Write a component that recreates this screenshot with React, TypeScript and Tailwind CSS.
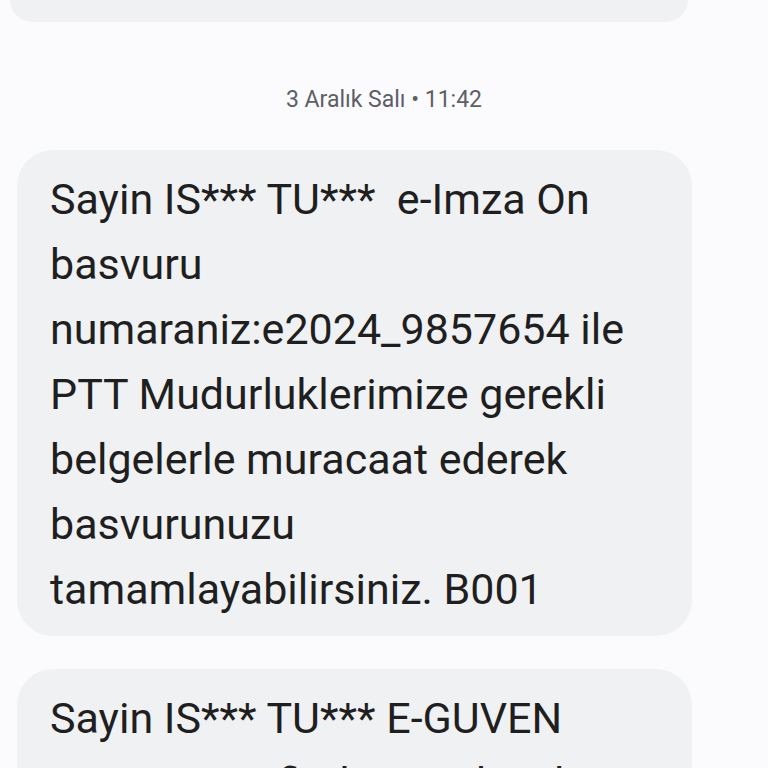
export default function App() {
  const lines = [
    'Sayin IS*** TU***\u00a0\u00a0e-Imza On',
    'basvuru',
    'numaraniz:e2024_9857654 ile',
    'PTT Mudurluklerimize gerekli',
    'belgelerle muracaat ederek',
    'basvurunuzu',
    'tamamlayabilirsiniz. B001',
  ];

  return (
    <div
      className="h-[768px] overflow-hidden bg-[#fbfbfe] text-[#1f1f1f]"
      style={{ fontFamily: 'Roboto, "Noto Sans", sans-serif' }}
    >
      <div className="ml-[10px] h-[22px] w-[678px] rounded-b-[36px] bg-[#f0f1f3]" />

      <div className="mt-[64px] mb-[36px] text-center text-[23px] leading-[28px] text-[#5c5f66]">
        3 Aralık Salı • 11:42
      </div>

      <div className="ml-[17px] w-[675px] rounded-[36px] bg-[#f0f1f3] pl-[33px] pr-6 pt-[17px] pb-[14px]">
        {lines.map((l) => (
          <div key={l} className="text-[43px] leading-[65px] whitespace-nowrap">
            {l}
          </div>
        ))}
      </div>

      <div className="mt-[33px] ml-[17px] w-[675px] rounded-[36px] bg-[#f0f1f3] pl-[33px] pr-6 pt-[17px] pb-[14px]">
        <div className="text-[43px] leading-[65px] whitespace-nowrap">Sayin IS*** TU*** E-GUVEN</div>
        <div className="text-[43px] leading-[65px] whitespace-nowrap">Firmasi tarafindan verilecek</div>
      </div>
    </div>
  );
}
